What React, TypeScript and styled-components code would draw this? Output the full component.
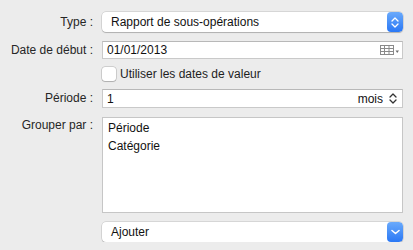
import React from "react";
import styled, { createGlobalStyle } from "styled-components";

const GlobalStyle = createGlobalStyle`
  html, body {
    margin: 0;
    padding: 0;
    background: #ececec;
  }
  body {
    font-family: "Liberation Sans", Arial, sans-serif;
    font-size: 12px;
    color: #1e1e1e;
  }
`;

export default function App() {
  return <>
    <GlobalStyle />
    <Form>
      <Row $mt={12}>
        <Label $h={20}>Type :</Label>
        <PopUp>
          <PopUpText>Rapport de sous-opérations</PopUpText>
          <BlueCap><UpDown color="#fff" /></BlueCap>
        </PopUp>
      </Row>

      <Row $mt={9}>
        <Label $h={18}>Date de début :</Label>
        <Field $h={18}>
          <FieldText>01/01/2013</FieldText>
          <CalendarIcon />
        </Field>
      </Row>

      <Row $mt={8}>
        <span />
        <CheckRow>
          <CheckBox />
          <span>Utiliser les dates de valeur</span>
        </CheckRow>
      </Row>

      <Row $mt={8}>
        <Label $h={19}>Période :</Label>
        <Field $h={19}>
          <FieldText>1</FieldText>
          <Unit>mois</Unit>
          <Stepper><UpDown color="#333" /></Stepper>
        </Field>
      </Row>

      <Row $mt={9}>
        <Label $h={16}>Grouper par :</Label>
        <List>
          <ListItem>Période</ListItem>
          <ListItem>Catégorie</ListItem>
        </List>
      </Row>

      <Row $mt={9}>
        <span />
        <PopUp>
          <PopUpText>Ajouter</PopUpText>
          <BlueCap><Down /></BlueCap>
        </PopUp>
      </Row>
    </Form>
  </>;
}

function UpDown({ color }: { color: string }) {
  return <svg width="8" height="13" viewBox="0 0 8 13">
    <path d="M1 5 L4 2 L7 5 M1 8 L4 11 L7 8" fill="none" stroke={color} strokeWidth="1.3" strokeLinecap="round" strokeLinejoin="round" />
  </svg>;
}

function Down() {
  return <svg width="9" height="6" viewBox="0 0 9 6">
    <path d="M1 1.5 L4.5 4.5 L8 1.5" fill="none" stroke="#fff" strokeWidth="1.5" strokeLinecap="round" strokeLinejoin="round" />
  </svg>;
}

function CalendarIcon() {
  return <CalWrap>
    <svg width="20" height="10" viewBox="0 0 20 10">
      <rect x="0.5" y="0.5" width="13" height="9" fill="none" stroke="#8a8a8a" />
      <path d="M0.5 3.5 H13.5 M0.5 6.5 H13.5 M4.5 0.5 V9.5 M9 0.5 V9.5" stroke="#8a8a8a" />
      <path d="M15.5 5.5 L19 5.5 L17.25 8 Z" fill="#6e6e6e" />
    </svg>
  </CalWrap>;
}

const Form = styled.div`
  display: flex;
  flex-direction: column;
  padding-right: 10px;
`

const Row = styled.div<{ $mt: number }>`
  display: grid;
  grid-template-columns: 93px 301px;
  column-gap: 9px;
  align-items: start;
  margin-top: ${p => p.$mt}px;
`

const Label = styled.div<{ $h: number }>`
  height: ${p => p.$h}px;
  line-height: ${p => p.$h}px;
  text-align: right;
  white-space: nowrap;
  color: #262626;
`

const PopUp = styled.div`
  display: flex;
  align-items: center;
  height: 20px;
  box-sizing: border-box;
  background: #fff;
  border-radius: 4px;
  box-shadow: 0 0 0 0.5px rgba(0, 0, 0, 0.18), 0 1px 1px rgba(0, 0, 0, 0.18);
  overflow: hidden;
  color: #111;
`

const PopUpText = styled.span`
  flex: 1;
  padding-left: 9px;
  white-space: nowrap;
`

const BlueCap = styled.div`
  width: 16px;
  height: 100%;
  display: flex;
  align-items: center;
  justify-content: center;
  border-radius: 4px;
  background: linear-gradient(#6aaafb, #2a78f5);
`

const Field = styled.div<{ $h: number }>`
  display: flex;
  align-items: center;
  height: ${p => p.$h}px;
  box-sizing: border-box;
  background: #fff;
  border: 1px solid #c9c9c9;
  border-top-color: #b8b8b8;
  color: #111;
`

const FieldText = styled.span`
  flex: 1;
  padding-left: 4px;
`

const CalWrap = styled.div`
  display: flex;
  align-items: center;
  padding-right: 2px;
`

const Unit = styled.span`
  padding-right: 6px;
`

const Stepper = styled.div`
  display: flex;
  align-items: center;
  padding-right: 5px;
`

const CheckRow = styled.label`
  display: flex;
  align-items: center;
  gap: 4px;
  height: 14px;
  color: #1e1e1e;
`

const CheckBox = styled.span`
  width: 14px;
  height: 14px;
  box-sizing: border-box;
  background: #fff;
  border-radius: 3px;
  box-shadow: 0 0 0 0.5px rgba(0, 0, 0, 0.25), 0 1px 1px rgba(0, 0, 0, 0.15);
`

const List = styled.div`
  height: 96px;
  box-sizing: border-box;
  background: #fff;
  border: 1px solid #c6c6c6;
  padding: 1px 0 0 5px;
  color: #111;
`

const ListItem = styled.div`
  height: 18px;
  line-height: 18px;
`
